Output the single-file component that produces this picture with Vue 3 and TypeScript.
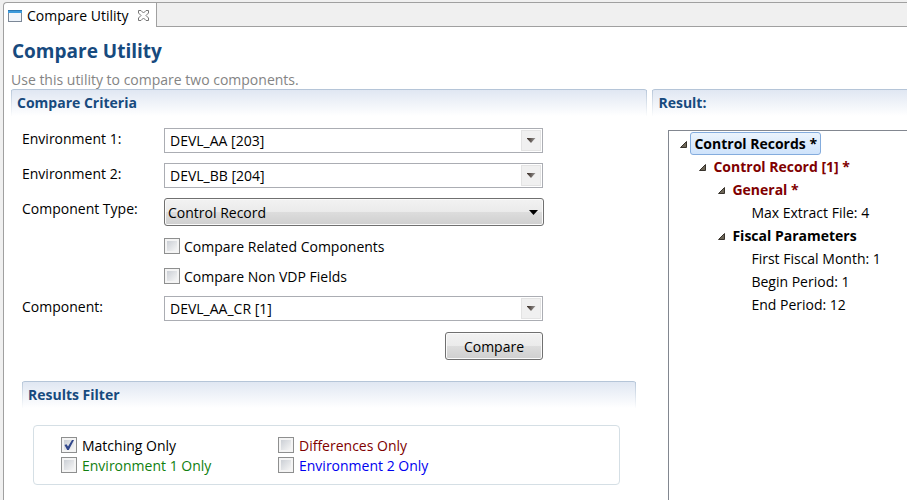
<script setup lang="ts">
import { reactive, ref } from 'vue'

interface TreeRow {
  label: string
  level: number
  branch: boolean
  changed?: boolean
}

interface FilterOption {
  id: string
  label: string
  checked: boolean
}

const form = reactive({
  environment1: 'DEVL_AA [203]',
  environment2: 'DEVL_BB [204]',
  componentType: 'Control Record',
  related: false,
  nonVdp: false,
  component: 'DEVL_AA_CR [1]',
})

const filters = reactive<FilterOption[]>([
  { id: 'matching', label: 'Matching Only', checked: true },
  { id: 'differences', label: 'Differences Only', checked: false },
  { id: 'env-one', label: 'Environment 1 Only', checked: false },
  { id: 'env-two', label: 'Environment 2 Only', checked: false },
])

const rows: TreeRow[] = [
  { label: 'Control Records *', level: 1, branch: true },
  { label: 'Control Record [1] *', level: 2, branch: true, changed: true },
  { label: 'General *', level: 3, branch: true, changed: true },
  { label: 'Max Extract File: 4', level: 4, branch: false },
  { label: 'Fiscal Parameters', level: 3, branch: true },
  { label: 'First Fiscal Month: 1', level: 4, branch: false },
  { label: 'Begin Period: 1', level: 4, branch: false },
  { label: 'End Period: 12', level: 4, branch: false },
]

const selected = ref(0)
</script>

<template>
  <div class="workbench">
    <div class="view">
      <div class="tabs">
        <div class="tab">
          <svg class="tab-icon" width="14" height="12" viewBox="0 0 14 12" aria-hidden="true">
            <rect x="0.5" y="0.5" width="13" height="11" fill="#f0f5fb" stroke="#7c8796" />
            <rect x="0" y="0" width="14" height="3" fill="#3d9bdc" />
            <rect x="0" y="0" width="14" height="1" fill="#2a78b4" />
          </svg>
          <span>Compare Utility</span>
          <button class="close" type="button" aria-label="Close">
            <svg width="11" height="11" viewBox="0 0 11 11" aria-hidden="true">
              <path
                d="M0.5 0.5H3L5.5 3L8 0.5H10.5V3L8 5.5L10.5 8V10.5H8L5.5 8L3 10.5H0.5V8L3 5.5L0.5 3Z"
                fill="#fff"
                stroke="#777"
              />
            </svg>
          </button>
        </div>
        <div class="tabs-rest"></div>
      </div>

      <main class="content">
        <h1>Compare Utility</h1>
        <p class="intro">Use this utility to compare two components.</p>

        <div class="columns">
          <section class="criteria">
            <h2 class="section-title">Compare Criteria</h2>
            <form class="form" @submit.prevent>
              <label class="caption" for="environment1">Environment 1:</label>
              <div class="combo">
                <select id="environment1" v-model="form.environment1">
                  <option>DEVL_AA [203]</option>
                </select>
                <span class="combo-arrow"></span>
              </div>

              <label class="caption" for="environment2">Environment 2:</label>
              <div class="combo">
                <select id="environment2" v-model="form.environment2">
                  <option>DEVL_BB [204]</option>
                </select>
                <span class="combo-arrow"></span>
              </div>

              <label class="caption" for="component-type">Component Type:</label>
              <div class="dropdown">
                <select id="component-type" v-model="form.componentType">
                  <option>Control Record</option>
                </select>
              </div>

              <label class="check related">
                <input v-model="form.related" type="checkbox" />
                <span>Compare Related Components</span>
              </label>
              <label class="check non-vdp">
                <input v-model="form.nonVdp" type="checkbox" />
                <span>Compare Non VDP Fields</span>
              </label>

              <label class="caption" for="component">Component:</label>
              <div class="combo">
                <select id="component" v-model="form.component">
                  <option>DEVL_AA_CR [1]</option>
                </select>
                <span class="combo-arrow"></span>
              </div>

              <button class="compare" type="submit">Compare</button>
            </form>

            <section class="filter">
              <h2 class="section-title">Results Filter</h2>
              <div class="filter-box">
                <label v-for="item in filters" :key="item.id" class="check" :class="item.id">
                  <input v-model="item.checked" type="checkbox" />
                  <span>{{ item.label }}</span>
                </label>
              </div>
            </section>
          </section>

          <section class="result">
            <h2 class="section-title">Result:</h2>
            <ul class="tree" role="tree">
              <li
                v-for="(row, i) in rows"
                :key="row.label"
                class="row"
                :class="['level-' + row.level, { branch: row.branch, changed: row.changed }]"
                role="treeitem"
                :aria-level="row.level"
                :aria-selected="selected === i"
                @click="selected = i"
              >
                <svg class="twisty" width="8" height="8" viewBox="0 0 8 8" aria-hidden="true">
                  <path v-if="row.branch" d="M6.5 1.5V7.5H0.5Z" fill="#6d6658" stroke="#38332c" />
                </svg>
                <span class="node" :class="{ selected: selected === i }">{{ row.label }}</span>
              </li>
            </ul>
          </section>
        </div>
      </main>
    </div>
  </div>
</template>

<style>
body {
  background: #f0f0f0;
}
</style>

<style scoped>
.workbench {
  display: flex;
  box-sizing: border-box;
  min-height: 100vh;
  padding: 2px 0 0 3px;
  font-family: 'Open Sans', 'Noto Sans', sans-serif;
  font-size: 14px;
  line-height: 20px;
  color: #000;
}

.view {
  display: flex;
  flex-direction: column;
  flex: 1;
  min-width: 0;
  border-top: 1px solid #a0a0a0;
  border-left: 1px solid #a0a0a0;
  border-top-left-radius: 4px;
  overflow: hidden;
  background: #fff;
}

.tabs {
  display: flex;
}

.tab {
  display: flex;
  align-items: center;
  box-sizing: border-box;
  height: 24px;
  padding: 2px 7px 0 4px;
  border-right: 1px solid #a0a0a0;
  white-space: nowrap;
}

.tab-icon {
  margin-right: 5px;
}

.close {
  display: flex;
  margin: 0 0 2px 9px;
  padding: 0;
  border: 0;
  background: none;
}

.tabs-rest {
  flex: 1;
  border-bottom: 1px solid #a0a0a0;
  background: #f0f0f0;
}

.content {
  display: flex;
  flex-direction: column;
  flex: 1;
  padding: 10px 0 0 7px;
}

h1 {
  margin: 0;
  padding-left: 1px;
  font-size: 19px;
  line-height: 28px;
  color: #174a7e;
}

.intro {
  margin: 5px 0 0;
  line-height: 19px;
  padding-bottom: 0;
  color: #848484;
}

.columns {
  display: grid;
  grid-template-columns: 5fr 2fr;
  gap: 5px;
  flex: 1;
}

.section-title {
  position: relative;
  margin: 0;
  padding: 3px 6px;
  border-top: 1px solid #b5c5d8;
  border-radius: 3px 3px 0 0;
  background: linear-gradient(#e0e7f2, #fff);
  font-size: 14px;
  line-height: 20px;
  color: #174a7e;
}

.section-title::before {
  content: '';
  position: absolute;
  inset: 0;
  border: solid;
  border-width: 0 1px;
  border-image: linear-gradient(#b5c5d8, #fff) 1;
}

.form {
  display: grid;
  grid-template-columns: 142px minmax(0, 380px);
  row-gap: 10px;
  padding: 12px 11px 0;
}

.caption {
  padding-top: 1px;
  white-space: nowrap;
}

.combo {
  position: relative;
  display: flex;
  margin-right: 1px;
}

select {
  appearance: none;
  width: 100%;
  margin: 0;
  font: inherit;
  color: inherit;
}

.combo select {
  height: 25px;
  padding: 0 24px 0 5px;
  border: 1px solid #abadb3;
  border-radius: 0;
  background: #fff;
}

.combo-arrow {
  position: absolute;
  inset: 2px 2px 2px auto;
  display: flex;
  align-items: center;
  justify-content: center;
  width: 18px;
  border: 1px solid #e3e3e3;
  background: #f0f0f0;
  pointer-events: none;
}

.combo-arrow::before {
  content: '';
  width: 9px;
  height: 5px;
  background: linear-gradient(100deg, #33261f, #aaa);
  clip-path: polygon(0 0, 100% 0, 50% 100%);
}

.dropdown {
  position: relative;
  display: flex;
}

.dropdown select,
.compare {
  height: 28px;
  border: 1px solid #707070;
  border-radius: 3px;
  background: linear-gradient(#f2f2f2, #ebebeb 48%, #dddddd 50%, #cfcfcf);
  box-shadow: inset 0 0 0 1px #fafafa;
}

.dropdown select {
  padding: 2px 24px 0 3px;
}

.dropdown::after {
  content: '';
  position: absolute;
  top: 12px;
  right: 6px;
  width: 9px;
  height: 5px;
  background: #000;
  clip-path: polygon(0 0, 100% 0, 50% 100%);
  pointer-events: none;
}

.check {
  display: flex;
  align-items: center;
  gap: 4px;
  justify-self: start;
  white-space: nowrap;
}

.check span {
  padding-top: 2px;
  line-height: 18px;
}

.related,
.non-vdp {
  grid-column: 2;
}

.check input {
  appearance: none;
  flex: none;
  box-sizing: border-box;
  width: 16px;
  height: 16px;
  margin: 0;
  border: 1px solid #8e8f8f;
  background: linear-gradient(135deg, #cbcfd5, #f6f6f6) content-box, #f4f4f4;
  padding: 2px;
}

.check input:checked {
  display: grid;
  place-items: center;
}

.check input:checked::before {
  content: '';
  width: 10px;
  height: 10px;
  background: #31478b;
  clip-path: polygon(5% 50%, 25% 42%, 40% 66%, 80% 0, 100% 0, 48% 100%, 32% 100%);
}

.compare {
  grid-column: 2;
  justify-self: end;
  width: 98px;
  margin: 1px 1px 0 0;
  padding: 2px 0 0;
  font: inherit;
  color: inherit;
}

.filter {
  margin: 21px 11px 0;
}

.filter-box {
  display: grid;
  grid-template-columns: 217px auto;
  justify-content: start;
  margin: 17px 16px 0 11px;
  padding: 9px 27px;
  border: 1px solid #d5dfe5;
  border-radius: 4px;
}

.filter-box .check {
  gap: 5px;
}

.differences {
  color: #800000;
}

.env-one {
  color: #108010;
}

.env-two {
  color: #0000f0;
}

.result {
  display: flex;
  flex-direction: column;
  min-width: 0;
}

.result .section-title {
  border-top-right-radius: 0;
}

.result .section-title::before {
  border-right-width: 0;
}

.tree {
  flex: 1;
  margin: 14px 0 0 16px;
  padding: 1px 0 0;
  border: solid #828790;
  border-width: 1px 0 0 1px;
  list-style: none;
}

.row {
  display: flex;
  align-items: center;
  height: 23px;
  padding-left: 11px;
  white-space: nowrap;
}

.level-2 {
  padding-left: 30px;
}

.level-3 {
  padding-left: 49px;
}

.level-4 {
  padding-left: 68px;
}

.twisty {
  margin-right: 2px;
}

.node {
  padding: 0 3px;
  border: 1px solid transparent;
  border-radius: 3px;
  line-height: 21px;
}

.branch {
  font-weight: 700;
}

.changed {
  color: #800000;
}

.node.selected {
  border-color: #84acdd;
  background: linear-gradient(#ebf4fd, #cfe3fb);
}
</style>
